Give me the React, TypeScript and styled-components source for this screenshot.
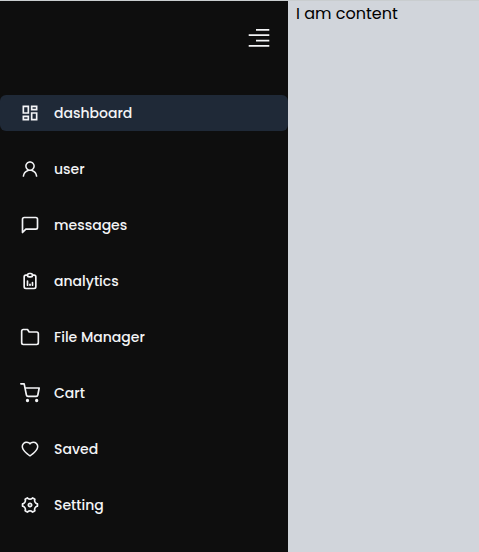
import React from 'react';
import styled, { createGlobalStyle } from 'styled-components';
import type { IconType } from 'react-icons';
import { MdOutlineDashboard } from 'react-icons/md';
import { AiOutlineUser, AiOutlineHeart } from 'react-icons/ai';
import { FiMessageSquare, FiFolder, FiShoppingCart } from 'react-icons/fi';
import { TbReportAnalytics } from 'react-icons/tb';
import { RiSettings4Line } from 'react-icons/ri';

const GlobalStyle = createGlobalStyle`
  *, *::before, *::after { box-sizing: border-box; }
  body {
    margin: 0;
    overflow: hidden;
    background: #d1d5db;
    font-family: Poppins, Inter, sans-serif;
  }
`;

const Page = styled.div`
  display: flex;
  height: 100vh;
  border-top: 1px solid #c9cdcf;
  background: #d1d5db;
`;

const Sidebar = styled.aside`
  flex: 0 0 288px;
  background: #0e0e0e;
  color: #f3f4f6;
`;

const SidebarHeader = styled.header`
  display: flex;
  justify-content: flex-end;
  height: 94px;
  padding: 24px 16px 0 0;
`;

const MenuButton = styled.button`
  display: block;
  width: 26px;
  height: 26px;
  padding: 0;
  border: 0;
  background: none;
  color: inherit;
  cursor: pointer;
`;

const Nav = styled.nav`
  display: flex;
  flex-direction: column;
  gap: 20px;
`;

const NavLink = styled.a<{ $active?: boolean }>`
  display: flex;
  align-items: center;
  gap: 14px;
  height: 36px;
  padding: 0 20px;
  border-radius: 6px;
  background: ${({ $active }) => ($active ? '#1f2937' : 'transparent')};
  color: inherit;
  text-decoration: none;

  svg { flex: none; }
`;

const Label = styled.span`
  font-size: 14px;
  font-weight: 500;
  line-height: 20px;
  white-space: nowrap;
`;

const Content = styled.main`
  flex: 1;
  padding: 1px 8px 0;
  color: #000;
  font-size: 16px;
  line-height: 24px;
`;

interface Item {
  name: string;
  icon: IconType;
  active?: boolean;
}

const items: Item[] = [
  { name: 'dashboard', icon: MdOutlineDashboard, active: true },
  { name: 'user', icon: AiOutlineUser },
  { name: 'messages', icon: FiMessageSquare },
  { name: 'analytics', icon: TbReportAnalytics },
  { name: 'File Manager', icon: FiFolder },
  { name: 'Cart', icon: FiShoppingCart },
  { name: 'Saved', icon: AiOutlineHeart },
  { name: 'Setting', icon: RiSettings4Line },
];

export default function App() {
  return (
    <>
      <GlobalStyle />
      <Page>
        <Sidebar>
          <SidebarHeader>
            <MenuButton aria-label="Toggle menu">
              <svg width="26" height="26" viewBox="0 0 26 26" fill="currentColor">
                <path d="M10 4h13.3v1.8H10zM2.7 9.2h20.6V11H2.7zM10 14.7h13.3v1.8H10zM2.7 20h20.6v1.8H2.7z" />
              </svg>
            </MenuButton>
          </SidebarHeader>
          <Nav>
            {items.map(({ name, icon: Icon, active }) => (
              <NavLink key={name} href="#" $active={active}>
                <Icon size={20} />
                <Label>{name}</Label>
              </NavLink>
            ))}
          </Nav>
        </Sidebar>
        <Content>I am content</Content>
      </Page>
    </>
  );
}
